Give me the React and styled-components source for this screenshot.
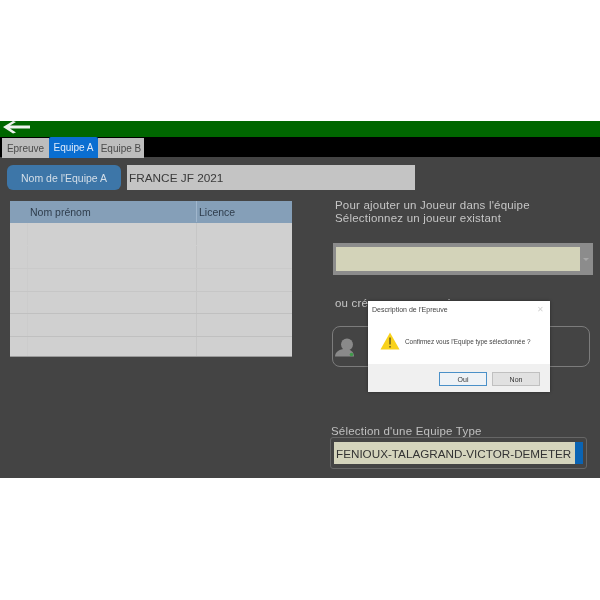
import React from "react";
import styled, { createGlobalStyle } from "styled-components";

const GlobalStyle = createGlobalStyle`
  html, body {
    margin: 0;
    padding: 0;
    background: #fff;
    font-family: "Liberation Sans", Arial, sans-serif;
  }
`;

const Page = styled.div`
  width: 600px;
  height: 600px;
  padding-top: 121px;
  box-sizing: border-box;
  background: #fff;
  overflow: hidden;
`;

const Screen = styled.div`
  position: relative;
  height: 357px;
  display: flex;
  flex-direction: column;
  background: #444444;
  filter: blur(0.5px);
`;

const TopBar = styled.div`
  height: 16px;
  background: #006600;
  display: flex;
  align-items: flex-start;
  padding-left: 2px;
`;

const TabBar = styled.div`
  height: 20px;
  background: #000;
  display: flex;
  align-items: flex-start;
  padding: 1px 0 0 2px;
  box-sizing: border-box;
`;

const Tab = styled.div`
  width: ${(p) => p.$width}px;
  height: ${(p) => (p.$active ? "21px" : "20px")};
  margin-top: ${(p) => (p.$active ? "-1px" : "0")};
  display: flex;
  align-items: center;
  justify-content: center;
  font-size: 10px;
  color: ${(p) => (p.$active ? "#dfeafa" : "#4a4a4a")};
  background: ${(p) => (p.$active ? "#0a6ed1" : "#bdbdbd")};
  border-radius: ${(p) => (p.$active ? "2px 2px 0 0" : "0")};
`;

const Content = styled.div`
  flex: 1;
  display: flex;
  flex-direction: column;
`;

const NameRow = styled.div`
  display: flex;
  gap: 6px;
  padding: 8px 0 0 7px;
`;

const NameLabel = styled.div`
  width: 114px;
  height: 25px;
  display: flex;
  align-items: center;
  justify-content: center;
  border-radius: 6px;
  background: #3d76a8;
  color: #d5dfe8;
  font-size: 10.5px;
`;

const NameInput = styled.div`
  width: 286px;
  height: 25px;
  padding-left: 2px;
  display: flex;
  align-items: center;
  background: #c4c4c4;
  color: #3a3a3a;
  font-size: 11.8px;
`;

const Columns = styled.div`
  flex: 1;
  display: flex;
  padding-left: 10px;
`;

const Table = styled.div`
  width: 282px;
  height: 156px;
  margin-top: 11px;
  background: #d0d0d0;
  border-bottom: 1px solid #9a9a9a;
  box-sizing: border-box;
`;

const TableRow = styled.div`
  display: grid;
  grid-template-columns: 18px 169px 1fr;
  height: ${(p) => p.$height}px;
  box-sizing: border-box;
  background: ${(p) => (p.$head ? "#859fb8" : "transparent")};
  border-bottom: 1px solid ${(p) => p.$line || "transparent"};
`;

const Cell = styled.div`
  display: flex;
  align-items: center;
  padding-left: ${(p) => p.$pad || 0}px;
  font-size: 10.5px;
  color: #2f3d4c;
  border-right: 1px solid ${(p) => p.$line || "transparent"};
`;

const Side = styled.div`
  width: 270px;
  margin-left: 38px;
  display: flex;
  flex-direction: column;
`;

const Hint = styled.div`
  margin: 9px 0 0 5px;
  color: #c6c6c6;
  font-size: 11.5px;
  line-height: 13px;
  letter-spacing: 0.2px;
`;

const PlayerSelect = styled.div`
  margin: 18px 0 0 3px;
  width: 260px;
  height: 32px;
  padding: 4px 0 4px 3px;
  box-sizing: border-box;
  display: flex;
  align-items: center;
  background: #8c8c8c;
`;

const PlayerValue = styled.div`
  width: 244px;
  height: 24px;
  background: #d3d3b9;
`;

const Caret = styled.div`
  margin: 0 0 0 3px;
  width: 0;
  height: 0;
  border-left: 3px solid transparent;
  border-right: 3px solid transparent;
  border-top: 3px solid #a8a8a8;
`;

const CreateLabel = styled.div`
  margin: 22px 0 0 5px;
  color: #c6c6c6;
  font-size: 11.5px;
  line-height: 13px;
  letter-spacing: 0.2px;
`;

const CreateBox = styled.div`
  margin: 16px 0 0 2px;
  width: 258px;
  height: 41px;
  box-sizing: border-box;
  padding-left: 1px;
  display: flex;
  align-items: center;
  border: 1px solid #7c7c7c;
  border-radius: 8px;
`;

const TeamLabel = styled.div`
  margin: 58px 0 0 1px;
  color: #c0c0c0;
  font-size: 11.5px;
  line-height: 12px;
  letter-spacing: 0.2px;
`;

const TeamSelect = styled.div`
  width: 257px;
  height: 32px;
  padding: 4px 3px;
  box-sizing: border-box;
  display: flex;
  align-items: stretch;
  border: 1px solid #666;
  border-radius: 3px;
`;

const TeamValue = styled.div`
  flex: 1;
  min-width: 0;
  padding-left: 2px;
  display: flex;
  align-items: center;
  background: #d4d4bc;
  color: #333;
  font-size: 11.7px;
  white-space: nowrap;
`;

const TeamScroll = styled.div`
  width: 8px;
  flex-shrink: 0;
  background: #0a64b4;
`;

const Dialog = styled.div`
  position: absolute;
  left: 368px;
  top: 180px;
  width: 182px;
  height: 91px;
  display: flex;
  flex-direction: column;
  background: #fff;
  box-shadow: 0 0 3px rgba(0, 0, 0, 0.4);
  filter: blur(0.35px);
`;

const DialogTitle = styled.div`
  height: 17px;
  padding: 0 6px 0 4px;
  display: flex;
  align-items: center;
  justify-content: space-between;
  font-size: 7px;
  color: #444;
`;

const DialogClose = styled.span`
  color: #d4d4d4;
  font-size: 8px;
`;

const DialogBody = styled.div`
  flex: 1;
  padding-left: 12px;
  display: flex;
  align-items: center;
  gap: 5px;
  font-size: 6.4px;
  color: #444;
  white-space: nowrap;
`;

const DialogFooter = styled.div`
  height: 28px;
  box-sizing: border-box;
  padding: 8px 10px 0 0;
  display: flex;
  justify-content: flex-end;
  gap: 5px;
  background: #f0f0f0;
`;

const DialogButton = styled.div`
  width: 48px;
  height: 14px;
  box-sizing: border-box;
  display: flex;
  align-items: center;
  justify-content: center;
  font-size: 7px;
  color: #333;
  background: ${(p) => (p.$primary ? "#eef2f6" : "#e1e1e1")};
  border: 1px solid ${(p) => (p.$primary ? "#4a90c8" : "#c0c0c0")};
`;

const rows = [
  { height: 23, line: "transparent" },
  { height: 23, line: "#cacaca" },
  { height: 23, line: "#c6c6c6" },
  { height: 22, line: "#c0c0c0" },
  { height: 23, line: "#c0c0c0" },
  { height: 20, line: "transparent" },
];

const App = () => {
  return (
    <Page>
      <GlobalStyle />
      <Screen>
        <TopBar>
          <svg width="28" height="13" viewBox="0 0 28 13">
            <path
              d="M1 6 11 0l3 1-6 3.5h20v3H8l6 4-3 1z"
              fill="#eef2ee"
            />
          </svg>
        </TopBar>
        <TabBar>
          <Tab $width={47}>Epreuve</Tab>
          <Tab $active $width={49}>Equipe A</Tab>
          <Tab $width={46}>Equipe B</Tab>
        </TabBar>
        <Content>
          <NameRow>
            <NameLabel>Nom de l'Equipe A</NameLabel>
            <NameInput>FRANCE JF 2021</NameInput>
          </NameRow>
          <Columns>
            <Table>
              <TableRow $head $height={22}>
                <Cell />
                <Cell $pad={2} $line="#a0b6cc">Nom prénom</Cell>
                <Cell $pad={2}>Licence</Cell>
              </TableRow>
              {rows.map((row, i) => (
                <TableRow key={i} $height={row.height} $line={row.line}>
                  <Cell $line="#cccccc" />
                  <Cell $line="#c6c6c6" />
                  <Cell />
                </TableRow>
              ))}
            </Table>
            <Side>
              <Hint>
                Pour ajouter un Joueur dans l'équipe
                <br />
                Sélectionnez un joueur existant
              </Hint>
              <PlayerSelect>
                <PlayerValue />
                <Caret />
              </PlayerSelect>
              <CreateLabel>ou créer un nouveau joueur</CreateLabel>
              <CreateBox>
                <svg width="22" height="24" viewBox="0 0 22 24">
                  <circle cx="13" cy="9.5" r="6" fill="#8a8a8a" />
                  <path d="M1 21.5c0-5 5-7.500 10-7.500s9 2.500 9 7.500z" fill="#8a8a8a" />
                  <circle cx="17.500" cy="19.500" r="1.800" fill="#3f9a4a" />
                </svg>
              </CreateBox>
              <TeamLabel>Sélection d'une Equipe Type</TeamLabel>
              <TeamSelect>
                <TeamValue>FENIOUX-TALAGRAND-VICTOR-DEMETER</TeamValue>
                <TeamScroll />
              </TeamSelect>
            </Side>
          </Columns>
        </Content>
        <Dialog>
          <DialogTitle>
            Description de l'Epreuve
            <DialogClose>✕</DialogClose>
          </DialogTitle>
          <DialogBody>
            <svg width="20" height="18" viewBox="0 0 20 18">
              <path d="M10 .5 19.500 17.500H.5z" fill="#f9d21a" />
              <path d="M10 5.500v7M10 14v1.600" stroke="#222" strokeWidth="1" />
            </svg>
            Confirmez vous l'Equipe type sélectionnée ?
          </DialogBody>
          <DialogFooter>
            <DialogButton $primary>Oui</DialogButton>
            <DialogButton>Non</DialogButton>
          </DialogFooter>
        </Dialog>
      </Screen>
    </Page>
  );
};

export default App;
